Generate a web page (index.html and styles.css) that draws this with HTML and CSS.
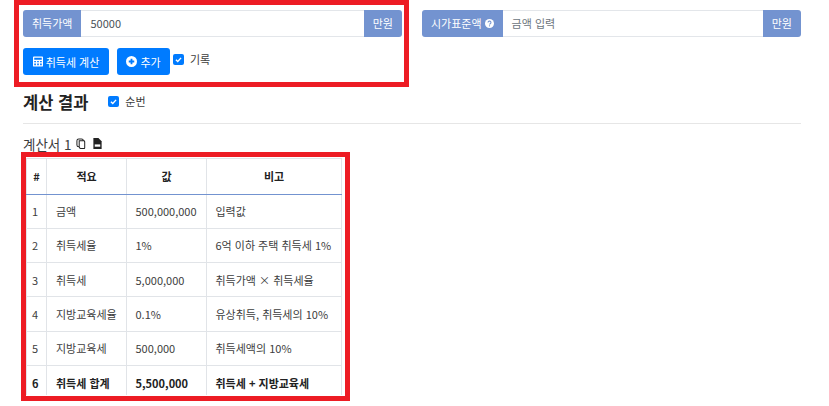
FILE: index.html
```html
<!DOCTYPE html>
<html lang="ko">
<head>
    <meta charset="UTF-8">
    <title>취득세 계산</title>
    <link rel="stylesheet" href="styles.css">
</head>
<body>
    <div class="top-row">
        <!-- 입력 영역 -->
        <div class="marked-box form-box">
            <div class="input-group">
                <span class="group-label label-first">취득가액</span>
                <div class="group-input">50000</div>
                <span class="group-label">만원</span>
            </div>
            <div class="button-row">
                <button class="btn btn-calc">
                    <svg class="btn-icon" viewBox="0 0 12 12"><path fill="#fff" fill-rule="evenodd" d="M1 0h10a1 1 0 0 1 1 1v10a1 1 0 0 1-1 1H1a1 1 0 0 1-1-1V1a1 1 0 0 1 1-1zm.5 1.5v2.5h9V1.500zm0 4v1.500h2V5.500zm3.500 0v1.500h2V5.500zm3.500 0v1.500h2V5.500zm-7 3v2h2v-2zm3.500 0v2h2v-2zm3.500 0v2h2v-2z"/></svg>
                    취득세 계산
                </button>
                <button class="btn btn-add">
                    <svg class="btn-icon add-icon" viewBox="0 0 12 12"><path fill="#fff" fill-rule="evenodd" d="M6 0a6 6 0 1 1 0 12A6 6 0 0 1 6 0zM5 3v2H3v2h2v2h2V7h2V5H7V3z"/></svg>
                    추가
                </button>
                <label class="check check-record"><span class="check-box"><svg viewBox="0 0 12 12"><path d="M3.200 6.200l2 2 3.600-4" fill="none" stroke="#fff" stroke-width="1.500"/></svg></span>기록</label>
            </div>
        </div>

        <div class="input-group side-group">
            <span class="group-label label-first">시가표준액
                <svg class="help-icon" viewBox="0 0 10 10"><circle cx="5" cy="5" r="5" fill="#fff"/><path d="M3.400 3.900a1.600 1.500 0 1 1 2.400 1.300c-.6.300-.8.500-.8 1" fill="none" stroke="#7393d0" stroke-width="1.200"/><rect x="4.400" y="7" width="1.200" height="1.200" fill="#7393d0"/></svg>
            </span>
            <div class="group-input placeholder">금액 입력</div>
            <span class="group-label">만원</span>
        </div>
    </div>

    <!-- 계산 결과 -->
    <div class="result-head">
        <h2>계산 결과</h2>
        <label class="check check-order"><span class="check-box"><svg viewBox="0 0 12 12"><path d="M3.200 6.200l2 2 3.600-4" fill="none" stroke="#fff" stroke-width="1.500"/></svg></span>순번</label>
    </div>
    <hr>

    <div class="sheet-title">
        <span>계산서 1</span>
        <svg class="sheet-icon" viewBox="0 0 12 12"><path fill="none" stroke="#222" stroke-width="1.100" d="M3.500 3h5a1 1 0 0 1 1 1v6.500a1 1 0 0 1-1 1h-3a2 2 0 0 1-2-2zM3.500 9.500H3a2 2 0 0 1-2-2V3a2 2 0 0 1 2-2h3a2 2 0 0 1 2 2"/></svg>
        <svg class="sheet-icon file-icon" viewBox="0 0 12 12"><path fill="#222" d="M1.500 0H7l3.500 3.500V12h-9z"/><rect x="3" y="7" width="6" height="2.500" fill="#fff"/></svg>
    </div>

    <div class="marked-box table-box">
        <table>
            <thead>
                <tr><th>#</th><th>적요</th><th>값</th><th>비고</th></tr>
            </thead>
            <tbody>
                <tr><td>1</td><td>금액</td><td>500,000,000</td><td>입력값</td></tr>
                <tr><td>2</td><td>취득세율</td><td>1%</td><td>6억 이하 주택 취득세 1%</td></tr>
                <tr><td>3</td><td>취득세</td><td>5,000,000</td><td>취득가액 × 취득세율</td></tr>
                <tr><td>4</td><td>지방교육세율</td><td>0.1%</td><td>유상취득, 취득세의 10%</td></tr>
                <tr><td>5</td><td>지방교육세</td><td>500,000</td><td>취득세액의 10%</td></tr>
                <tr class="total-row"><td>6</td><td>취득세 합계</td><td>5,500,000</td><td>취득세 + 지방교육세</td></tr>
            </tbody>
        </table>
    </div>
</body>
</html>
```

FILE: styles.css
```css
/* General Styles */
body {
    margin: 0;
    padding: 0 28px 0 14px;
    height: 406px;
    box-sizing: border-box;
    overflow: hidden;
    background-color: #fff;
    color: #3d3d3d;
    font-family: "Noto Sans CJK KR", "Noto Sans", sans-serif;
    font-size: 11px;
}

/* Red marker boxes */
.marked-box {
    border: 5px solid #ed1c24;
    box-sizing: border-box;
}

.top-row {
    display: flex;
    align-items: flex-start;
    gap: 13px;
}

.form-box {
    width: 395px;
    height: 87px;
    padding: 5px 2px 0 4px;
    flex-shrink: 0;
}

/* Input groups */
.input-group {
    display: flex;
    height: 27px;
    line-height: 27px;
}

.side-group {
    width: 379px;
    margin-top: 10px;
}

.group-label {
    display: flex;
    align-items: center;
    gap: 3px;
    padding: 0 9px;
    background-color: #7393d0;
    color: #fff;
    border-radius: 0 3px 3px 0;
}

.label-first {
    border-radius: 3px 0 0 3px;
}

.group-input {
    flex: 1;
    padding-left: 9px;
    border-top: 1px solid #e3e6ea;
    border-bottom: 1px solid #e3e6ea;
    line-height: 25px;
    color: #495057;
}

.placeholder {
    color: #6c757d;
}

.help-icon {
    width: 9px;
    height: 9px;
}

/* Buttons */
.button-row {
    display: flex;
    align-items: flex-start;
    margin-top: 11px;
}

.btn {
    display: flex;
    align-items: center;
    justify-content: center;
    gap: 3px;
    height: 27px;
    padding: 0;
    border: none;
    border-radius: 3px;
    background-color: #007bff;
    color: #fff;
    font-family: inherit;
    font-size: 11px;
}

.btn-calc {
    width: 86px;
}

.btn-add {
    width: 53px;
    margin-left: 8px;
}

.btn-icon {
    width: 10px;
    height: 11px;
}

.add-icon {
    width: 11px;
    height: 11px;
}

/* Checkboxes */
.check {
    display: flex;
    align-items: center;
    gap: 6px;
}

.check-record {
    margin: 3px 0 0 3px;
}

.check-order {
    margin-bottom: 3px;
}

.check-box {
    display: block;
    width: 11px;
    height: 11px;
    border-radius: 2px;
    background-color: #007bff;
}

.check-box svg {
    display: block;
}

/* Result heading */
.result-head {
    display: flex;
    align-items: center;
    gap: 20px;
    margin: 2px 0 0 9px;
    height: 27px;
}

h2 {
    margin: 0;
    font-size: 16.5px;
    line-height: 27px;
    color: #222;
}

hr {
    margin: 7px 0 0 9px;
    border: none;
    border-top: 1px solid #e6e6e6;
}

.sheet-title {
    display: flex;
    align-items: center;
    height: 17px;
    margin: 11px 0 0 9px;
    font-size: 13.500px;
}

.sheet-icon {
    width: 11px;
    height: 11px;
    margin-left: 4px;
}

.file-icon {
    margin-left: 5px;
}

/* Table */
.table-box {
    width: 329px;
    height: 249px;
    margin-left: 7px;
    padding: 1px 3px 0 0;
}

table {
    width: 316px;
    border-collapse: collapse;
    table-layout: fixed;
}

th, td {
    box-sizing: border-box;
    border: 1px solid #e1e4e8;
    padding: 0 0 0 9px;
    height: 34.300px;
    text-align: left;
}

th {
    height: 35.500px;
    padding: 0;
    text-align: center;
    color: #222;
    border-bottom: 1px solid #7393d0;
}

th:nth-child(1), td:nth-child(1) {
    width: 20px;
    padding-left: 5px;
}

th:nth-child(1) {
    padding: 0;
}

th:nth-child(2), td:nth-child(2),
th:nth-child(3), td:nth-child(3) {
    width: 80px;
}

td:nth-child(n+3) {
    padding-left: 8.500px;
}

.total-row td {
    height: 30px;
    padding-top: 4px;
    border-bottom: none;
    font-weight: 700;
    color: #222;
}
```
